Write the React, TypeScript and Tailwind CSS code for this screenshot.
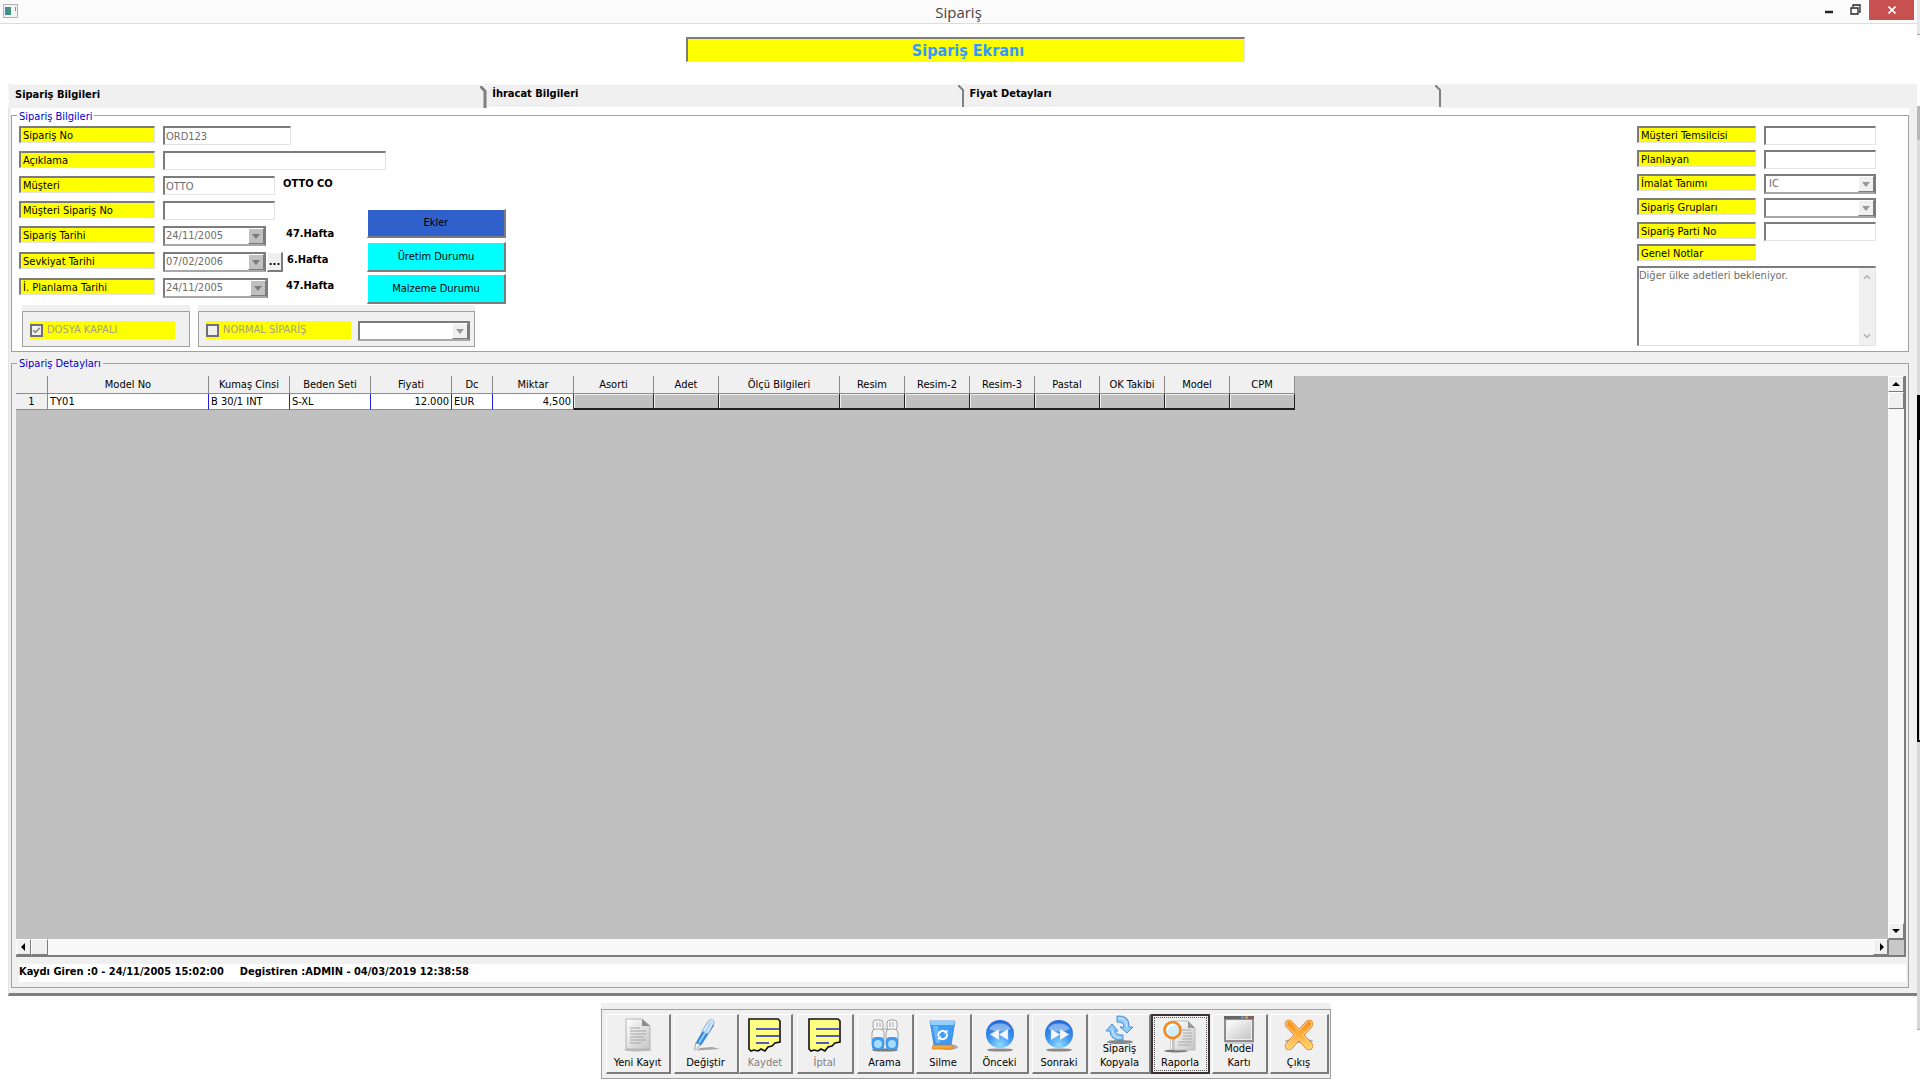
import React, { useState } from 'react';
import { Check, ChevronDown, ChevronUp } from 'lucide-react';

const SUNKEN = 'border-t-2 border-l-2 border-r border-b border-t-[#7c7c7c] border-l-[#7c7c7c] border-r-[#e3e3e3] border-b-[#e3e3e3]';
const RAISED = 'border-t border-l border-r-2 border-b-2 border-t-white border-l-white border-r-[#7c7c7c] border-b-[#7c7c7c]';

const tabs = ['Sipariş Bilgileri', 'İhracat Bilgileri', 'Fiyat Detayları'];

const columns = [
  { title: 'Model No', width: 'w-[161px]', value: 'TY01' },
  { title: 'Kumaş Cinsi', width: 'w-[81px]', value: 'B 30/1 INT' },
  { title: 'Beden Seti', width: 'w-[81px]', value: 'S-XL' },
  { title: 'Fiyati', width: 'w-[81px]', value: '12.000', right: true },
  { title: 'Dc', width: 'w-[41px]', value: 'EUR' },
  { title: 'Miktar', width: 'w-[81px]', value: '4,500', right: true },
  { title: 'Asorti', width: 'w-[80px]' },
  { title: 'Adet', width: 'w-[65px]' },
  { title: 'Ölçü Bilgileri', width: 'w-[121px]' },
  { title: 'Resim', width: 'w-[65px]' },
  { title: 'Resim-2', width: 'w-[65px]' },
  { title: 'Resim-3', width: 'w-[65px]' },
  { title: 'Pastal', width: 'w-[65px]' },
  { title: 'OK Takibi', width: 'w-[65px]' },
  { title: 'Model', width: 'w-[65px]' },
  { title: 'CPM', width: 'w-[65px]' },
];

const YellowLabel = ({ htmlFor, children, className }: { htmlFor: string; children: React.ReactNode; className: string }) => (
  <label htmlFor={htmlFor} className={`h-[17px] shrink-0 bg-[#ffff00] pl-[2px] leading-4 whitespace-nowrap ${SUNKEN} ${className}`}>
    {children}
  </label>
);

const TextBox = ({ id, value = '', className }: { id: string; value?: string; className: string }) => (
  <input id={id} type="text" defaultValue={value} className={`h-[19px] bg-white pl-px text-[#6d6d6d] outline-none ${SUNKEN} ${className}`} />
);

const Combo = ({ id, value = '', className, dark, label }: { id: string; value?: string; className: string; dark?: boolean; label?: string }) => (
  <div className={`relative h-5 bg-white border-2 border-[#7c7c7c] border-b-[#a8a8a8] ${className}`}>
    <select id={id} aria-label={label} defaultValue={value} className={`block w-full h-4 appearance-none bg-transparent leading-4 text-[#6d6d6d] outline-none ${dark ? 'pl-px' : 'pl-[3px]'}`}>
      <option>{value}</option>
    </select>
    <span className={`pointer-events-none absolute top-0 right-0 flex h-4 w-4 items-center justify-center border border-t-white border-l-white border-r-[#7c7c7c] border-b-[#7c7c7c] ${dark ? 'bg-[#c0c0c0]' : 'bg-[#f0f0f0]'}`}>
      <svg width="8" height="5" viewBox="0 0 8 5"><path d="M0 0h8L4 5z" fill={dark ? '#7a7a7a' : '#999999'} /></svg>
    </span>
  </div>
);

const ScrollButton = ({ label, d, className }: { label: string; d: string; className: string }) => (
  <button aria-label={label} className={`flex shrink-0 items-center justify-center bg-[#f0f0f0] border border-t-white border-l-white border-r-[#7c7c7c] border-b-[#7c7c7c] ${className}`}>
    <svg width="8" height="8" viewBox="0 0 8 8"><path d={d} fill="#000" /></svg>
  </button>
);

const PageIcon = () => (
  <svg width="32" height="36" viewBox="0 0 32 36">
    <defs>
      <linearGradient id="page" x1="0" y1="0" x2="1" y2="1"><stop offset="0" stopColor="#ffffff" /><stop offset="1" stopColor="#c4c4c4" /></linearGradient>
    </defs>
    <ellipse cx="16" cy="33" rx="14" ry="1.5" fill="#bbb" />
    <path d="M4 2h16l8 7v23H4z" fill="url(#page)" stroke="#b4b4b4" />
    <path d="M20 2v7h8z" fill="#8e8e8e" />
    <path d="M8 11h10M8 14h16M8 17h16M8 20h14M8 23h16M8 26h11" stroke="#a4a4a4" />
  </svg>
);

const PenIcon = () => (
  <svg width="32" height="36" viewBox="0 0 32 36">
    <path d="M6 33.500l24-1.500-8-2-12 1z" fill="#a5a5a5" />
    <path d="M18 5L6 26l-1 6 6-4L24 8z" fill="#2f8ded" stroke="#2b6fb5" strokeWidth=".6" />
    <path d="M18.500 4c2-3 7-1 5 3L18 17l-6-3z" fill="#dcebf8" stroke="#7d9cb8" strokeWidth=".8" />
    <path d="M21 5l-6 11L9 26" stroke="#9ed0ff" strokeWidth="1.600" fill="none" />
    <path d="M6 26l5 2-6.500 5z" fill="#f1f1f1" stroke="#888" strokeWidth=".5" />
  </svg>
);

const NoteIcon = () => (
  <svg width="34" height="36" viewBox="0 0 34 36">
    <path d="M1 2h29l2 2v21l-5 1-3 3-4 1-3 4-4-2-3 2-4-1-3 1-2-2z" fill="#ffff80" stroke="#111" strokeWidth="1.600" />
    <path d="M8 12h23M8 19h23M8 26h13" stroke="#2222cc" strokeWidth="1.500" />
  </svg>
);

const BinocularsIcon = () => (
  <svg width="32" height="36" viewBox="0 0 32 36">
    <ellipse cx="16" cy="33" rx="13" ry="1.6" fill="#777" />
    <g stroke="#a2a2a2">
      <rect x="4" y="3" width="10" height="10" rx="3" fill="#f7f7f7" />
      <rect x="18" y="3" width="10" height="10" rx="3" fill="#f7f7f7" />
      <path d="M8 5v5M11 5v5M21 5v5M24 5v5M13 12h6" fill="none" />
      <rect x="3" y="12" width="12" height="20" rx="4" fill="#f4f4f4" />
      <rect x="17" y="12" width="12" height="20" rx="4" fill="#f4f4f4" />
    </g>
    <rect x="3" y="20" width="12" height="13" rx="4" fill="#3b9cf0" />
    <rect x="17" y="20" width="12" height="13" rx="4" fill="#3b9cf0" />
    <ellipse cx="9" cy="27" rx="4" ry="4" fill="#a8dcff" />
    <ellipse cx="23" cy="27" rx="4" ry="4" fill="#a8dcff" />
  </svg>
);

const BinIcon = () => (
  <svg width="32" height="36" viewBox="0 0 32 36">
    <ellipse cx="21" cy="30" rx="10" ry="3" fill="#aaa" />
    <path d="M3 4h25l-4 24H7z" fill="#3d9cf5" stroke="#1f6fd0" strokeWidth=".6" />
    <path d="M3 4h25l-1 4H4z" fill="#8fd0ff" />
    <path d="M6 9l3 17h4L11 9z" fill="#6bb9fb" />
    <path d="M11.500 19a4.500 4.500 0 0 1 7.500-4M20 17a4.500 4.500 0 0 1-7.500 4" stroke="#fff" strokeWidth="2" fill="none" />
    <path d="M20.500 12.500v4h-4zM11 23.500v-4h4z" fill="#fff" />
    <path d="M6 28h19l1 4H5z" fill="#f5a43a" stroke="#d97a12" strokeWidth=".6" />
  </svg>
);

const ArrowBall = ({ forward }: { forward?: boolean }) => (
  <svg width="32" height="36" viewBox="0 0 32 36">
    <defs>
      <radialGradient id="ball" cx=".5" cy=".9" r=".9"><stop offset="0" stopColor="#8fdcff" /><stop offset=".5" stopColor="#3b94f0" /><stop offset="1" stopColor="#2467d6" /></radialGradient>
    </defs>
    <ellipse cx="16" cy="33" rx="13" ry="1.600" fill="#8a8a8a" />
    <circle cx="16" cy="17" r="14" fill="url(#ball)" />
    <path d="M5 12a12 9 0 0 1 22 0q-11 5-22 0z" fill="#fff" opacity=".4" />
    <path d={forward ? 'M8 12l9 5.500-9 5.500zM17 12l9 5.500-9 5.500z' : 'M15 12l-9 5.500 9 5.500zM24 12l-9 5.500 9 5.500z'} fill="#f4f8fc" stroke="#a5bfd8" strokeWidth=".4" />
  </svg>
);

const CopyIcon = () => (
  <svg width="32" height="30" viewBox="0 0 32 30">
    <ellipse cx="16" cy="27" rx="13" ry="2" fill="#888" />
    <g fill="#8fcbf8" stroke="#3d86d2" strokeWidth=".9">
      <path d="M13 1q13-1 12 11h4l-6 6-7-6h4q0-5-7-5z" />
      <path d="M19 25Q6 26 6 16H2l6-7 6 7h-3q1 4 8 4z" />
    </g>
    <path d="M14 3q9 0 9 9M17 23q-8 0-9-8" stroke="#d8efff" fill="none" />
  </svg>
);

const ReportIcon = () => (
  <svg width="36" height="36" viewBox="0 0 36 36">
    <ellipse cx="14" cy="33" rx="12" ry="1.500" fill="#777" />
    <path d="M12 3h14l7 7v22H12z" fill="url(#page)" stroke="#bdbdbd" />
    <path d="M26 3v7h7z" fill="#999" />
    <path d="M20 12h9M21 15h9M21 18h9M20 21h10M16 24h14M16 27h12" stroke="#aaa" />
    <path d="M10 20v11" stroke="#bcbcbc" strokeWidth="3.500" />
    <path d="M9.500 20v11" stroke="#fff" strokeWidth="1" />
    <circle cx="10.500" cy="12" r="8" fill="#d3ecfb" stroke="#f28a1c" strokeWidth="2.600" />
    <path d="M5 12a6 6 0 0 1 7-5" stroke="#fff" strokeWidth="2" fill="none" />
  </svg>
);

const WindowIcon = () => (
  <svg width="32" height="30" viewBox="0 0 32 30">
    <rect x="1" y="1" width="30" height="26" fill="#8f8f8f" />
    <rect x="1" y="1" width="30" height="3" fill="#666" />
    <path d="M18 2.500h3" stroke="#59a5ee" strokeWidth="2" />
    <path d="M22 2.500h3" stroke="#f2a23a" strokeWidth="2" />
    <path d="M26 2.500h3" stroke="#d8472c" strokeWidth="2" />
    <rect x="3.500" y="5.500" width="25" height="19" fill="url(#page)" stroke="#eee" />
    <path d="M2 28h29" stroke="#aaa" />
  </svg>
);

const ExitIcon = () => (
  <svg width="32" height="36" viewBox="0 0 32 36">
    <defs>
      <linearGradient id="cross" x1="0" y1="0" x2="0" y2="36" gradientUnits="userSpaceOnUse"><stop offset="0" stopColor="#f98010" /><stop offset="1" stopColor="#ffe070" /></linearGradient>
    </defs>
    <ellipse cx="16" cy="24" rx="14" ry="2" fill="#aaa" />
    <g fill="none" strokeLinecap="round">
      <path d="M6 7l20 22M26 7L6 29" stroke="#e27a14" strokeWidth="8.500" />
      <path d="M6 7l20 22M26 7L6 29" stroke="#ffdba0" strokeWidth="6.800" />
      <path d="M6 7l20 22M26 7L6 29" stroke="url(#cross)" strokeWidth="5" />
    </g>
  </svg>
);

const tools = [
  { label: 'Yeni Kayıt', icon: <PageIcon />, width: 'w-[65px] mr-[3px]' },
  { label: 'Değiştir', icon: <PenIcon />, width: 'w-[65px]' },
  { label: 'Kaydet', icon: <NoteIcon />, width: 'w-[54px] mr-1', off: true },
  { label: 'İptal', icon: <NoteIcon />, width: 'w-[57px] mr-[3px]', off: true },
  { label: 'Arama', icon: <BinocularsIcon />, width: 'w-[57px] mr-[2px]' },
  { label: 'Silme', icon: <BinIcon />, width: 'w-[56px]' },
  { label: 'Önceki', icon: <ArrowBall />, width: 'w-[57px] mr-[3px]' },
  { label: 'Sonraki', icon: <ArrowBall forward />, width: 'w-[56px] mr-[2px]' },
  { label: 'Sipariş Kopyala', icon: <CopyIcon />, width: 'w-[61px]', tall: true },
  { label: 'Raporla', icon: <ReportIcon />, width: 'w-[59px] mr-[2px]', focused: true },
  { label: 'Model Kartı', icon: <WindowIcon />, width: 'w-[56px] mr-[2px]', tall: true },
  { label: 'Çıkış', icon: <ExitIcon />, width: 'w-[59px]' },
];

const TitleBar = () => (
  <header className="flex h-6 shrink-0 items-start justify-between border-b border-[#dcdcdc] bg-[#fbfbfb]">
    <div className="flex-1 pt-1 pl-[3px]">
      <svg width="16" height="14" viewBox="0 0 16 14">
        <rect x=".5" y=".5" width="14" height="13" fill="#f4f4f4" stroke="#b0b0b0" />
        <rect x="2" y="3" width="6" height="8" fill="#3d9a78" />
        <path d="M2 3h3v8H2z" fill="#4b84a8" />
        <path d="M12 3h1v4h-1z" fill="#4caa8c" />
      </svg>
    </div>
    <h1 className="font-['Open_Sans',sans-serif] text-[15px] leading-6 text-[#444]">Sipariş</h1>
    <div className="flex flex-1 justify-end pr-[3px]">
      <button aria-label="Minimize" className="flex h-5 w-7 items-center justify-center">
        <svg width="8" height="10" viewBox="0 0 8 10"><path d="M0 7h8" stroke="#222" strokeWidth="2.500" /></svg>
      </button>
      <button aria-label="Restore" className="flex h-5 w-6 items-center justify-center">
        <svg width="11" height="12" viewBox="0 0 11 12"><path d="M1 4h7v6H1zM.500 4h8M3 3V1h7v7H9" fill="none" stroke="#222" strokeWidth="1.300" /></svg>
      </button>
      <button aria-label="Close" className="ml-[2px] flex h-5 w-[45px] items-center justify-center bg-[#c75050]">
        <svg width="8" height="8" viewBox="0 0 8 8"><path d="M.5.5l7 7M7.500.5l-7 7" stroke="#fff" strokeWidth="1.600" /></svg>
      </button>
    </div>
  </header>
);

const OrderForm = () => (
  <div className="flex flex-col gap-[6px]">
    <div className="flex h-[19px]">
      <YellowLabel htmlFor="no" className="w-[136px] mr-2">Sipariş No</YellowLabel>
      <TextBox id="no" value="ORD123" className="w-[128px]" />
    </div>
    <div className="flex h-[19px]">
      <YellowLabel htmlFor="desc" className="w-[136px] mr-2">Açıklama</YellowLabel>
      <TextBox id="desc" className="w-[223px]" />
    </div>
    <div className="flex h-[19px]">
      <YellowLabel htmlFor="customer" className="w-[136px] mr-2">Müşteri</YellowLabel>
      <TextBox id="customer" value="OTTO" className="w-[112px]" />
      <b className="ml-2 leading-4">OTTO CO</b>
    </div>
    <div className="flex h-[19px]">
      <YellowLabel htmlFor="custno" className="w-[136px] mr-2">Müşteri Sipariş No</YellowLabel>
      <TextBox id="custno" className="w-[112px]" />
    </div>
    <div className="flex h-5">
      <YellowLabel htmlFor="orderDate" className="w-[136px] mr-2">Sipariş Tarihi</YellowLabel>
      <Combo id="orderDate" value="24/11/2005" dark className="w-[103px]" />
      <b className="ml-5 leading-4">47.Hafta</b>
    </div>
    <div className="flex h-5">
      <YellowLabel htmlFor="shipDate" className="w-[136px] mr-2">Sevkiyat Tarihi</YellowLabel>
      <Combo id="shipDate" value="07/02/2006" dark className="w-[103px]" />
      <button className={`ml-px mr-1 h-5 w-4 bg-[#f0f0f0] leading-3 font-bold ${RAISED}`}>...</button>
      <b className="leading-4">6.Hafta</b>
    </div>
    <div className="flex h-5">
      <YellowLabel htmlFor="planDate" className="w-[136px] mr-2">İ. Planlama Tarihi</YellowLabel>
      <Combo id="planDate" value="24/11/2005" dark className="w-[105px]" />
      <b className="ml-[18px] leading-4">47.Hafta</b>
    </div>
  </div>
);

const FlagPanels = () => (
  <div className="mt-px ml-[3px] flex gap-2">
    <div className="border-t-[6px] border-[#f0f0f0]">
      <div className="flex h-9 w-[168px] items-start border border-[#a0a0a0] bg-[#f0f0f0] pt-[9px] pl-[7px]">
        <label className="flex h-[18px] w-[145px] items-center gap-1 bg-[#ffff00] text-[#a3a383]">
          <span className="relative flex h-[13px] w-[13px]">
            <input type="checkbox" defaultChecked className="h-[13px] w-[13px] appearance-none border-2 border-[#707070] bg-[#f0f0f0]" />
            <Check className="pointer-events-none absolute top-[2px] left-[2px] h-[9px] w-[9px] text-[#888]" strokeWidth={4} />
          </span>
          DOSYA KAPALI
        </label>
      </div>
    </div>
    <div className="border-t-[6px] border-[#f0f0f0]">
      <div className="flex h-9 w-[277px] items-start gap-[7px] border border-[#a0a0a0] bg-[#f0f0f0] pt-[9px] pl-[7px]">
        <label className="flex h-[18px] w-[145px] items-center gap-1 bg-[#ffff00] text-[#a3a383]">
          <input type="checkbox" className="h-[13px] w-[13px] appearance-none border-2 border-[#707070] bg-[#f0f0f0]" />
          NORMAL SİPARİŞ
        </label>
        <Combo id="orderKind" label="Sipariş türü" className="w-[112px]" />
      </div>
    </div>
  </div>
);

const SideForm = () => (
  <div className="flex w-[239px] flex-col gap-[5px]">
    <div className="flex h-[19px] gap-2">
      <YellowLabel htmlFor="rep" className="w-[119px]">Müşteri Temsilcisi</YellowLabel>
      <TextBox id="rep" className="w-[112px]" />
    </div>
    <div className="flex h-[19px] gap-2">
      <YellowLabel htmlFor="planner" className="w-[119px]">Planlayan</YellowLabel>
      <TextBox id="planner" className="w-[112px]" />
    </div>
    <div className="flex h-[19px] gap-2">
      <YellowLabel htmlFor="make" className="w-[119px]">İmalat Tanımı</YellowLabel>
      <Combo id="make" value="IC" className="w-[112px]" />
    </div>
    <div className="flex h-[19px] gap-2">
      <YellowLabel htmlFor="groups" className="w-[119px]">Sipariş Grupları</YellowLabel>
      <Combo id="groups" className="w-[112px]" />
    </div>
    <div className="flex h-[17px] gap-2">
      <YellowLabel htmlFor="lot" className="w-[119px]">Sipariş Parti No</YellowLabel>
      <TextBox id="lot" className="w-[112px]" />
    </div>
    <YellowLabel htmlFor="notes" className="w-[119px]">Genel Notlar</YellowLabel>
    <div className={`flex h-20 bg-white ${SUNKEN}`}>
      <textarea id="notes" defaultValue="Diğer ülke adetleri bekleniyor." className="flex-1 resize-none overflow-hidden leading-4 text-[#6d6d6d] outline-none" />
      <div className="flex w-4 flex-col items-center justify-between bg-[#f0f0f0] py-1 text-[#b4b4b4]">
        <ChevronUp size={10} strokeWidth={4} />
        <ChevronDown size={10} strokeWidth={4} />
      </div>
    </div>
  </div>
);

const DetailGrid = () => (
  <div className="flex flex-1 flex-col border-r-2 border-b-2 border-r-[#7c7c7c] border-b-[#7c7c7c] bg-[#c0c0c0]">
    <div className="flex flex-1">
      <div className="flex-1 overflow-hidden">
        <table className="w-[1279px] table-fixed border-separate border-spacing-0">
          <thead>
            <tr className="bg-[#f0f0f0]">
              <th className="h-[18px] w-8 border-r border-b border-[#8c8c8c]"></th>
              {columns.map((col) => (
                <th key={col.title} className={`h-[18px] border-r border-b border-[#8c8c8c] px-0 pt-px pb-0 leading-4 font-normal whitespace-nowrap ${col.width}`}>
                  {col.title}
                </th>
              ))}
            </tr>
          </thead>
          <tbody>
            <tr>
              <td className="h-4 border-r border-b border-[#8c8c8c] bg-[#f0f0f0] p-0 text-center leading-[15px]">1</td>
              {columns.map((col) => (
                <td
                  key={col.title}
                  className={col.value
                    ? `h-4 border-r border-b border-r-[#2020e8] border-b-[#8c8c8c] bg-white px-[2px] py-0 leading-[15px] whitespace-nowrap ${col.right ? 'text-right' : ''}`
                    : 'h-4 border-r border-b-2 border-[#202020] bg-[#c0c0c0] p-0 shadow-[inset_1px_1px_0_#f0f0f0]'}
                >
                  {col.value}
                </td>
              ))}
            </tr>
          </tbody>
        </table>
      </div>
      <div className="flex w-4 flex-col bg-[#f8f8f8]">
        <ScrollButton label="Yukarı" d="M4 2l4 4H0z" className="h-4 w-4" />
        <div className="h-[17px] border border-t-white border-l-white border-r-[#7c7c7c] border-b-[#7c7c7c] bg-[#f0f0f0]" />
        <div className="flex-1" />
        <ScrollButton label="Aşağı" d="M4 6l4-4H0z" className="h-4 w-4" />
      </div>
    </div>
    <div className="flex h-4">
      <div className="flex flex-1 bg-[#f8f8f8]">
        <ScrollButton label="Sola" d="M1 4l4-4v8z" className="h-4 w-[15px]" />
        <div className="w-[17px] border border-t-white border-l-white border-r-[#7c7c7c] border-b-[#7c7c7c] bg-[#f0f0f0]" />
        <div className="flex-1" />
        <ScrollButton label="Sağa" d="M7 4l-4-4v8z" className="h-4 w-[15px]" />
      </div>
      <div className="w-4 border-t border-l border-[#7c7c7c] bg-[#c8c8c8]" />
    </div>
  </div>
);

export default function App() {
  const [active, setActive] = useState(tabs[0]);

  return (
    <div className="flex min-h-screen bg-white font-['DejaVu_Sans_Condensed','DejaVu_Sans',sans-serif] text-[11px] text-black">
      <div className="flex min-w-0 flex-1 flex-col">
        <TitleBar />

        <div className="mt-[13px] mb-[22px] flex justify-center pl-[14px]">
          <h2 className={`h-[25px] w-[559px] bg-[#ffff00] pl-1 text-center text-[16px] leading-6 font-bold text-[#3399ff] ${SUNKEN}`}>
            Sipariş Ekranı
          </h2>
        </div>

        <nav className="ml-2 flex h-6 shrink-0 bg-[#f0f0f0]">
          {tabs.map((tab) => (
            <button
              key={tab}
              onClick={() => setActive(tab)}
              className={`flex w-1/4 items-start justify-between rounded-tl-md border-t border-l border-[#fafafa] pl-[6px] text-left font-bold ${active === tab ? 'pt-px' : 'border-b border-b-white'}`}
            >
              <span className="leading-[18px]">{tab}</span>
              <svg className="relative z-10 -mr-[2px]" width="7" height="22" viewBox="0 0 7 22"><path d="M0 0l5 5v17" fill="none" stroke="#808080" strokeWidth={active === tab ? 3 : 2} /></svg>
            </button>
          ))}
        </nav>

        <main className="ml-2 flex flex-1 flex-col border-l border-b-[3px] border-l-[#e3e3e3] border-b-[#808080] bg-[#f0f0f0] pr-2 pb-[5px] pl-[2px]">
          <div className="flex shrink-0 flex-col bg-white">
            <fieldset className="min-w-0 border border-[#a0a0a0] pt-1 pr-8 pb-1 pl-[7px]">
              <legend className="-ml-[2px] h-[14px] px-[2px] leading-[18px] text-[#0000d0]">Sipariş Bilgileri</legend>
              <div className="flex justify-between">
                <div>
                  <div className="flex">
                    <OrderForm />
                    <div className="-ml-[19px] mt-[83px] flex w-[139px] flex-col gap-[2px]">
                      <button className={`h-[29px] bg-[#3060cc] pt-px ${RAISED}`}>Ekler</button>
                      <button className={`mt-[2px] h-[30px] bg-[#00ffff] pt-px ${RAISED}`}>Üretim Durumu</button>
                      <button className={`h-[30px] bg-[#00ffff] pt-px ${RAISED}`}>Malzeme Durumu</button>
                    </div>
                  </div>
                  <FlagPanels />
                </div>
                <SideForm />
              </div>
            </fieldset>
          </div>

          <fieldset className="mt-1 flex min-w-0 flex-1 flex-col border border-[#a0a0a0] pt-[6px] pr-[2px] pb-[5px] pl-1">
            <legend className="ml-px h-[14px] px-[2px] leading-4 text-[#0000d0]">Sipariş Detayları</legend>
            <DetailGrid />
            <p className="mt-[7px] ml-[3px] flex h-[18px] gap-4 bg-white leading-4 font-bold">
              <span>Kaydı Giren :0 - 24/11/2005 15:02:00</span>
              <span>Degistiren :ADMIN - 04/03/2019 12:38:58</span>
            </p>
          </fieldset>
        </main>

        <footer className="mt-[7px] mb-px flex shrink-0 justify-center pl-[14px]">
          <div className="border-t-[6px] border-[#f0f0f0]">
            <div className="flex h-[70px] border border-[#a0a0a0] bg-[#f0f0f0] pt-1 pr-px pl-1">
              {tools.map((tool) => (
                <button
                  key={tool.label}
                  disabled={tool.off}
                  className={`flex h-[60px] shrink-0 flex-col items-center justify-between pb-[2px] leading-[14px] ${tool.width} ${tool.tall ? 'px-2' : ''} ${tool.off ? 'text-[#808080]' : ''} ${tool.focused ? 'border-2 border-[#3a3232] outline-1 -outline-offset-4 outline-dotted outline-[#555]' : RAISED}`}
                >
                  <span className={tool.tall ? 'h-[27px]' : 'h-9 pt-[2px]'}>{tool.icon}</span>
                  <span>{tool.label}</span>
                </button>
              ))}
            </div>
          </div>
        </footer>
      </div>

      {/* sliver of the window behind */}
      <div className="flex w-[3px] flex-col">
        <div className="h-[35px] border-b border-[#a0a0a0] bg-[#e8e8e8]" />
        <div className="h-[71px] bg-white" />
        <div className="h-[34px] bg-[#b8b8b8]" />
        <div className="h-[255px] bg-[#dcdcdc]" />
        <div className="h-[45px] bg-black" />
        <div className="h-[302px] border-l-2 border-b-2 border-black bg-[#d8d8d8]" />
        <div className="h-[288px] border-b border-[#b0b0b0] bg-[#d8d8d8]" />
      </div>
    </div>
  );
}
